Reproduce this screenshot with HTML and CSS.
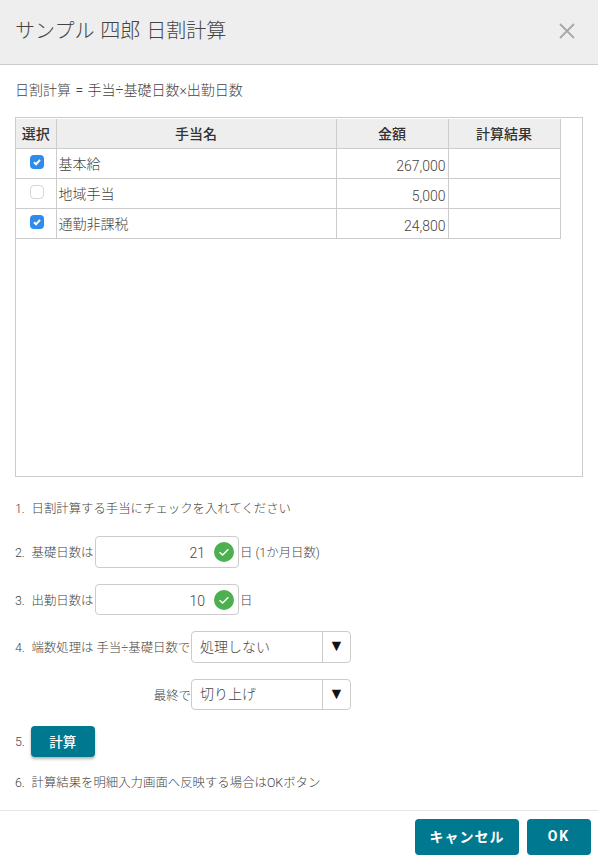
FILE: index.html
```html
<!DOCTYPE html>
<html lang="ja">
<head>
<meta charset="utf-8">
<title>日割計算</title>
<link rel="stylesheet" href="styles.css">
</head>
<body>
<div class="modal">
  <header class="head">
    <h1 class="title">サンプル 四郎 日割計算</h1>
    <svg class="close" width="16" height="16" viewBox="0 0 16 16"><path d="M1 1L15 15M15 1L1 15" stroke="#a8a8a8" stroke-width="1.8" fill="none"/></svg>
  </header>
  <main class="body">
    <p class="formula">日割計算 = 手当÷基礎日数×出勤日数</p>
    <div class="box">
      <table class="grid">
        <colgroup><col class="c1"><col class="c2"><col class="c3"><col class="c4"></colgroup>
        <thead><tr><th>選択</th><th>手当名</th><th>金額</th><th>計算結果</th></tr></thead>
        <tbody>
          <tr><td class="chk"><span class="cb on"><svg width="14" height="14" viewBox="0 0 14 14"><path d="M4 7.2L6.1 9.2L10 4.9" stroke="#fff" stroke-width="2" fill="none"/></svg></span></td><td class="name">基本給</td><td class="num">267,000</td><td></td></tr>
          <tr><td class="chk"><span class="cb"></span></td><td class="name">地域手当</td><td class="num">5,000</td><td></td></tr>
          <tr><td class="chk"><span class="cb on"><svg width="14" height="14" viewBox="0 0 14 14"><path d="M4 7.2L6.1 9.2L10 4.9" stroke="#fff" stroke-width="2" fill="none"/></svg></span></td><td class="name">通勤非課税</td><td class="num">24,800</td><td></td></tr>
        </tbody>
      </table>
    </div>
    <p class="step s1"><span class="no">1.</span>日割計算する手当にチェックを入れてください</p>
    <div class="step row r2">
      <span class="lab"><span class="no">2.</span>基礎日数は</span>
      <span class="input"><span class="val">21</span><svg class="ok" width="20" height="20" viewBox="0 0 20 20"><circle cx="10" cy="10" r="10" fill="#4caf50"/><path d="M5.6 10.2L8.6 13L14.4 7.2" stroke="#fff" stroke-width="1.4" fill="none"/></svg></span>
      <span>日 (1か月日数)</span>
    </div>
    <div class="step row r3">
      <span class="lab"><span class="no">3.</span>出勤日数は</span>
      <span class="input"><span class="val">10</span><svg class="ok" width="20" height="20" viewBox="0 0 20 20"><circle cx="10" cy="10" r="10" fill="#4caf50"/><path d="M5.6 10.2L8.6 13L14.4 7.2" stroke="#fff" stroke-width="1.4" fill="none"/></svg></span>
      <span>日</span>
    </div>
    <div class="step row r4">
      <span class="lab2"><span class="no">4.</span>端数処理は 手当÷基礎日数で</span>
      <span class="select"><span class="opt">処理しない</span><span class="arrow">▼</span></span>
    </div>
    <div class="step row r5">
      <span class="lab2 final">最終で</span>
      <span class="select"><span class="opt">切り上げ</span><span class="arrow">▼</span></span>
    </div>
    <div class="step row r6">
      <span>5.</span>
      <button class="btn calc">計算</button>
    </div>
    <p class="step s6"><span class="no">6.</span>計算結果を明細入力画面へ反映する場合はOKボタン</p>
  </main>
  <footer class="foot">
    <button class="btn big cancel">キャンセル</button>
    <button class="btn big okb">OK</button>
  </footer>
</div>
</body>
</html>
```
FILE: styles.css
```css
* { box-sizing: border-box; }
html, body { margin: 0; padding: 0; background: #fff; }
body { font-family: Roboto, "Noto Sans CJK JP", sans-serif; font-weight: 300; color: #444; font-size: 12px; }
.modal { width: 598px; height: 863px; display: flex; flex-direction: column; overflow: hidden; }
.head { height: 65px; flex: none; background: #eee; border-bottom: 1px solid #ccc; display: flex; align-items: center; justify-content: space-between; padding: 0 23px 2px 15px; }
.title { margin: 0; font-size: 20px; font-weight: 300; color: #444; line-height: 24px; word-spacing: 1px; }
.close { display: block; }
.body { flex: 1; padding: 0 15px; }
.formula { margin: 0; height: 52px; line-height: 51px; font-size: 14px; word-spacing: 1px; }
.box { height: 360px; border: 1px solid #ccc; }
.grid { border-collapse: collapse; table-layout: fixed; width: 544px; margin-top: 1px; font-size: 14px; }
.c1 { width: 40px; } .c2 { width: 280px; } .c3 { width: 112px; } .c4 { width: 112px; }
.grid th { height: 29px; background: #eee; border: 1px solid #ccc; font-weight: 500; font-size: 14px; color: #333; padding: 0; }
.grid td { height: 30px; border: 1px solid #ccc; padding: 0 2px 0 1px; }
.grid td.name { padding: 0 2px 0 2px; }
.grid tr > :first-child { border-left: 0; }
.grid thead th { border-top: 0; }
.grid td.chk { text-align: center; padding: 0 0 0 2px; }
.cb { display: inline-flex; width: 14px; height: 14px; border-radius: 4px; border: 1px solid #d5d5d5; background: #fff; vertical-align: 0; }
.cb.on { background: #2d8ceb; border: 0; }
.grid td.num { text-align: right; padding-top: 6px; font-size: 14px; }
.step { margin: 0; font-size: 12.4px; }
.no { display: inline-block; width: 16.5px; }
.lab { width: 80px; flex: none; }
.lab2 { width: 176px; flex: none; }
.s1 { margin-top: 24px; line-height: 16px; }
.row { display: flex; align-items: center; }
.input { width: 144px; height: 32px; border: 1px solid #ccc; border-radius: 4px; display: flex; align-items: center; justify-content: flex-end; padding-right: 4px; margin-right: 1px; background: #fff; }
.val { font-size: 14px; margin-right: 9px; padding-top: 2px; }
.ok { display: block; }
.r2 { margin-top: 19px; height: 32px; }
.r3 { margin-top: 16px; height: 31px; }
.r3 .input { height: 31px; }
.r4 { margin-top: 16px; height: 32px; }
.r5 { margin-top: 16px; height: 31px; }
.r5 .select { height: 31px; }
.select { width: 160px; height: 32px; border: 1px solid #ccc; border-radius: 4px; display: flex; align-items: center; font-size: 14px; }
.opt { flex: 1; padding: 0 0 3px 8px; border-right: 1px solid #ccc; height: 100%; display: flex; align-items: center; }
.arrow { width: 27px; padding-bottom: 3px; text-align: center; color: #111; font-size: 16px; font-family: "DejaVu Sans", sans-serif; }
.final { text-align: right; }
.r6 { margin-top: 16px; height: 31px; gap: 6px; }
.btn { border: 0; background: #00788f; color: #fff; font-family: inherit; font-weight: 500; border-radius: 4px; padding: 0 0 2px; }
.calc { width: 64px; height: 31px; font-size: 13.5px; box-shadow: 0 2px 3px rgba(0,0,0,.3); }
.s6 { margin-top: 18px; line-height: 16px; }
.foot { flex: none; height: 53px; border-top: 1px solid #e5e5e5; display: flex; justify-content: flex-end; gap: 8px; padding: 8px 7px 0 0; }
.big { height: 36px; font-size: 14px; font-weight: 700; letter-spacing: 1px; }
.cancel { width: 104px; }
.okb { width: 64px; letter-spacing: 2px; }
```
